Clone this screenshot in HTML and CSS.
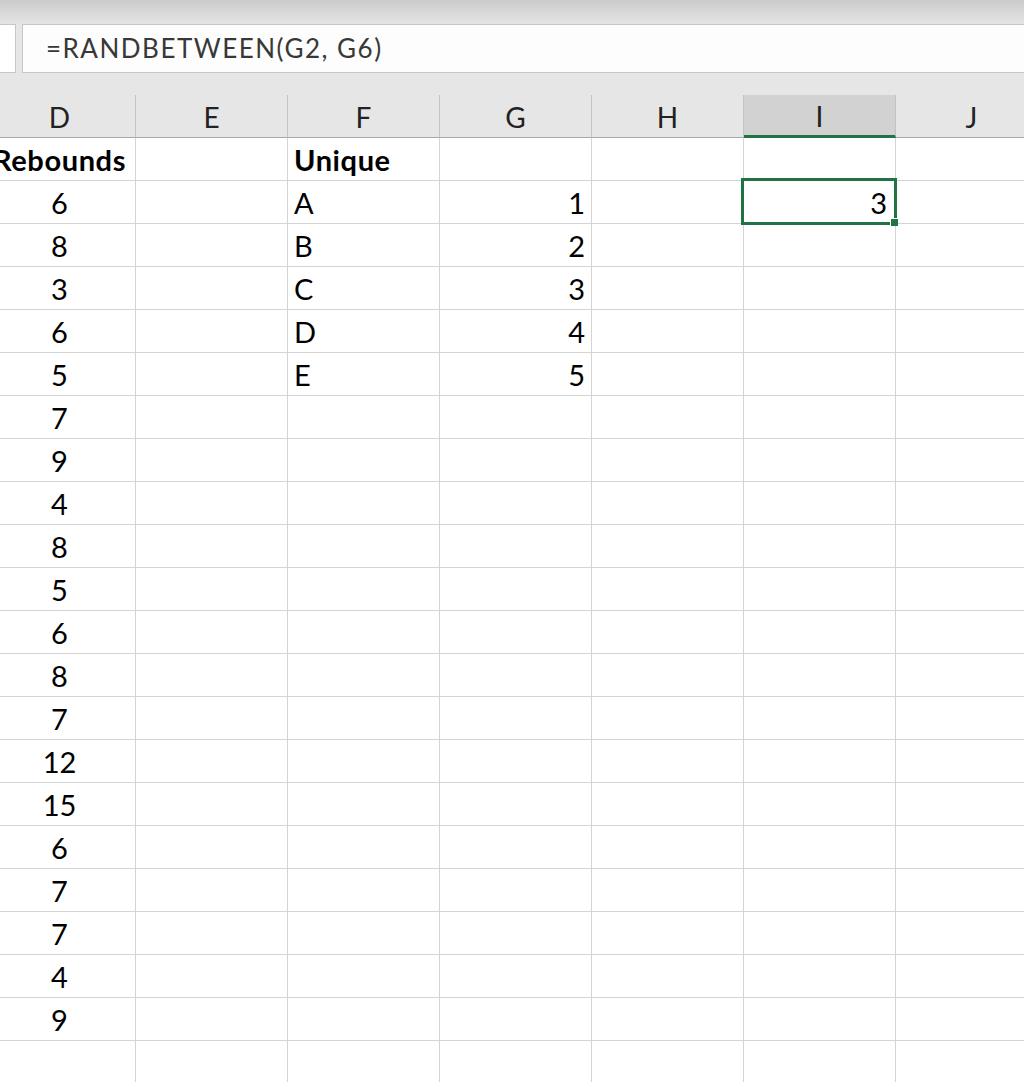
FILE: index.html
```html
<!DOCTYPE html>
<html lang="en">
<head>
<meta charset="utf-8">
<title>RANDBETWEEN</title>
<link rel="stylesheet" href="styles.css">
</head>
<body>
<div class="app">
  <div class="ribbon-edge"></div>
  <div class="fbar">
    <div class="namebox"></div>
    <div class="formula">=RANDBETWEEN(G2, G6)</div>
  </div>
  <div class="sheet">
    <div class="hdr">D</div><div class="hdr">E</div><div class="hdr">F</div><div class="hdr">G</div><div class="hdr">H</div><div class="hdr hdr-active">I</div><div class="hdr">J</div>

    <div class="cell c b">Rebounds</div><div class="cell"></div><div class="cell l b">Unique</div><div class="cell"></div><div class="cell"></div><div class="cell"></div><div class="cell"></div>
    <div class="cell c">6</div><div class="cell"></div><div class="cell l">A</div><div class="cell r">1</div><div class="cell"></div><div class="cell r sel">3</div><div class="cell"></div>
    <div class="cell c">8</div><div class="cell"></div><div class="cell l">B</div><div class="cell r">2</div><div class="cell"></div><div class="cell"></div><div class="cell"></div>
    <div class="cell c">3</div><div class="cell"></div><div class="cell l">C</div><div class="cell r">3</div><div class="cell"></div><div class="cell"></div><div class="cell"></div>
    <div class="cell c">6</div><div class="cell"></div><div class="cell l">D</div><div class="cell r">4</div><div class="cell"></div><div class="cell"></div><div class="cell"></div>
    <div class="cell c">5</div><div class="cell"></div><div class="cell l">E</div><div class="cell r">5</div><div class="cell"></div><div class="cell"></div><div class="cell"></div>
    <div class="cell c">7</div><div class="cell"></div><div class="cell"></div><div class="cell"></div><div class="cell"></div><div class="cell"></div><div class="cell"></div>
    <div class="cell c">9</div><div class="cell"></div><div class="cell"></div><div class="cell"></div><div class="cell"></div><div class="cell"></div><div class="cell"></div>
    <div class="cell c">4</div><div class="cell"></div><div class="cell"></div><div class="cell"></div><div class="cell"></div><div class="cell"></div><div class="cell"></div>
    <div class="cell c">8</div><div class="cell"></div><div class="cell"></div><div class="cell"></div><div class="cell"></div><div class="cell"></div><div class="cell"></div>
    <div class="cell c">5</div><div class="cell"></div><div class="cell"></div><div class="cell"></div><div class="cell"></div><div class="cell"></div><div class="cell"></div>
    <div class="cell c">6</div><div class="cell"></div><div class="cell"></div><div class="cell"></div><div class="cell"></div><div class="cell"></div><div class="cell"></div>
    <div class="cell c">8</div><div class="cell"></div><div class="cell"></div><div class="cell"></div><div class="cell"></div><div class="cell"></div><div class="cell"></div>
    <div class="cell c">7</div><div class="cell"></div><div class="cell"></div><div class="cell"></div><div class="cell"></div><div class="cell"></div><div class="cell"></div>
    <div class="cell c">12</div><div class="cell"></div><div class="cell"></div><div class="cell"></div><div class="cell"></div><div class="cell"></div><div class="cell"></div>
    <div class="cell c">15</div><div class="cell"></div><div class="cell"></div><div class="cell"></div><div class="cell"></div><div class="cell"></div><div class="cell"></div>
    <div class="cell c">6</div><div class="cell"></div><div class="cell"></div><div class="cell"></div><div class="cell"></div><div class="cell"></div><div class="cell"></div>
    <div class="cell c">7</div><div class="cell"></div><div class="cell"></div><div class="cell"></div><div class="cell"></div><div class="cell"></div><div class="cell"></div>
    <div class="cell c">7</div><div class="cell"></div><div class="cell"></div><div class="cell"></div><div class="cell"></div><div class="cell"></div><div class="cell"></div>
    <div class="cell c">4</div><div class="cell"></div><div class="cell"></div><div class="cell"></div><div class="cell"></div><div class="cell"></div><div class="cell"></div>
    <div class="cell c">9</div><div class="cell"></div><div class="cell"></div><div class="cell"></div><div class="cell"></div><div class="cell"></div><div class="cell"></div>
    <div class="cell"></div><div class="cell"></div><div class="cell"></div><div class="cell"></div><div class="cell"></div><div class="cell"></div><div class="cell"></div>
  </div>
</div>
</body>
</html>
```

FILE: styles.css
```css
html, body {
  margin: 0;
  padding: 0;
  background: #ffffff;
  overflow: hidden;
}

.app {
  width: 1024px;
  height: 1082px;
  overflow: hidden;
  background: #e6e6e6;
  font-family: Lato, "Liberation Sans", sans-serif;
}

.ribbon-edge {
  height: 24px;
  background: linear-gradient(#cbcbcb, #e4e4e4);
}

.fbar {
  display: flex;
  gap: 6px;
  height: 49px;
  margin-bottom: 22px;
}

.namebox {
  width: 16px;
  box-sizing: border-box;
  border: 1px solid #c6c6c6;
  border-left: none;
  background: #ffffff;
}

.formula {
  flex: 1;
  margin-right: -4px;
  box-sizing: border-box;
  border: 1px solid #c6c6c6;
  background: #fdfdfd;
  padding: 1px 0 0 23px;
  line-height: 45px;
  font-size: 26px;
  letter-spacing: 1.5px;
  color: #383838;
  white-space: nowrap;
}

.sheet {
  display: grid;
  grid-template-columns: repeat(7, 152px);
  margin-left: -16px;
  background: #ffffff;
}

.hdr {
  height: 43px;
  box-sizing: border-box;
  background: #e6e6e6;
  border-right: 1px solid #c2c2c2;
  border-bottom: 1px solid #a9a9a9;
  text-align: center;
  font-size: 28px;
  line-height: 44px;
  color: #222222;
}

.hdr-active {
  background: #d2d2d2;
  border-bottom: 3px solid #217346;
  line-height: 42px;
}

.cell {
  height: 43px;
  box-sizing: border-box;
  border-right: 1px solid #d4d4d4;
  border-bottom: 1px solid #d4d4d4;
  font-size: 29px;
  line-height: 43px;
  color: #000000;
  white-space: nowrap;
}

.c {
  text-align: center;
  overflow: visible;
}

.l {
  text-align: left;
  padding-left: 6px;
}

.r {
  text-align: right;
  padding-right: 6px;
}

.b {
  font-weight: 700;
  letter-spacing: 0.6px;
}

.sel {
  position: relative;
  padding-right: 8px;
}

.sel::before {
  content: "";
  position: absolute;
  left: -3px;
  top: -3px;
  right: -2px;
  bottom: -2px;
  border: 3px solid #217346;
  box-sizing: border-box;
}

.sel::after {
  content: "";
  position: absolute;
  right: -3px;
  bottom: -3px;
  width: 7px;
  height: 7px;
  background: #217346;
  border-left: 1px solid #ffffff;
  border-top: 1px solid #ffffff;
}
```
